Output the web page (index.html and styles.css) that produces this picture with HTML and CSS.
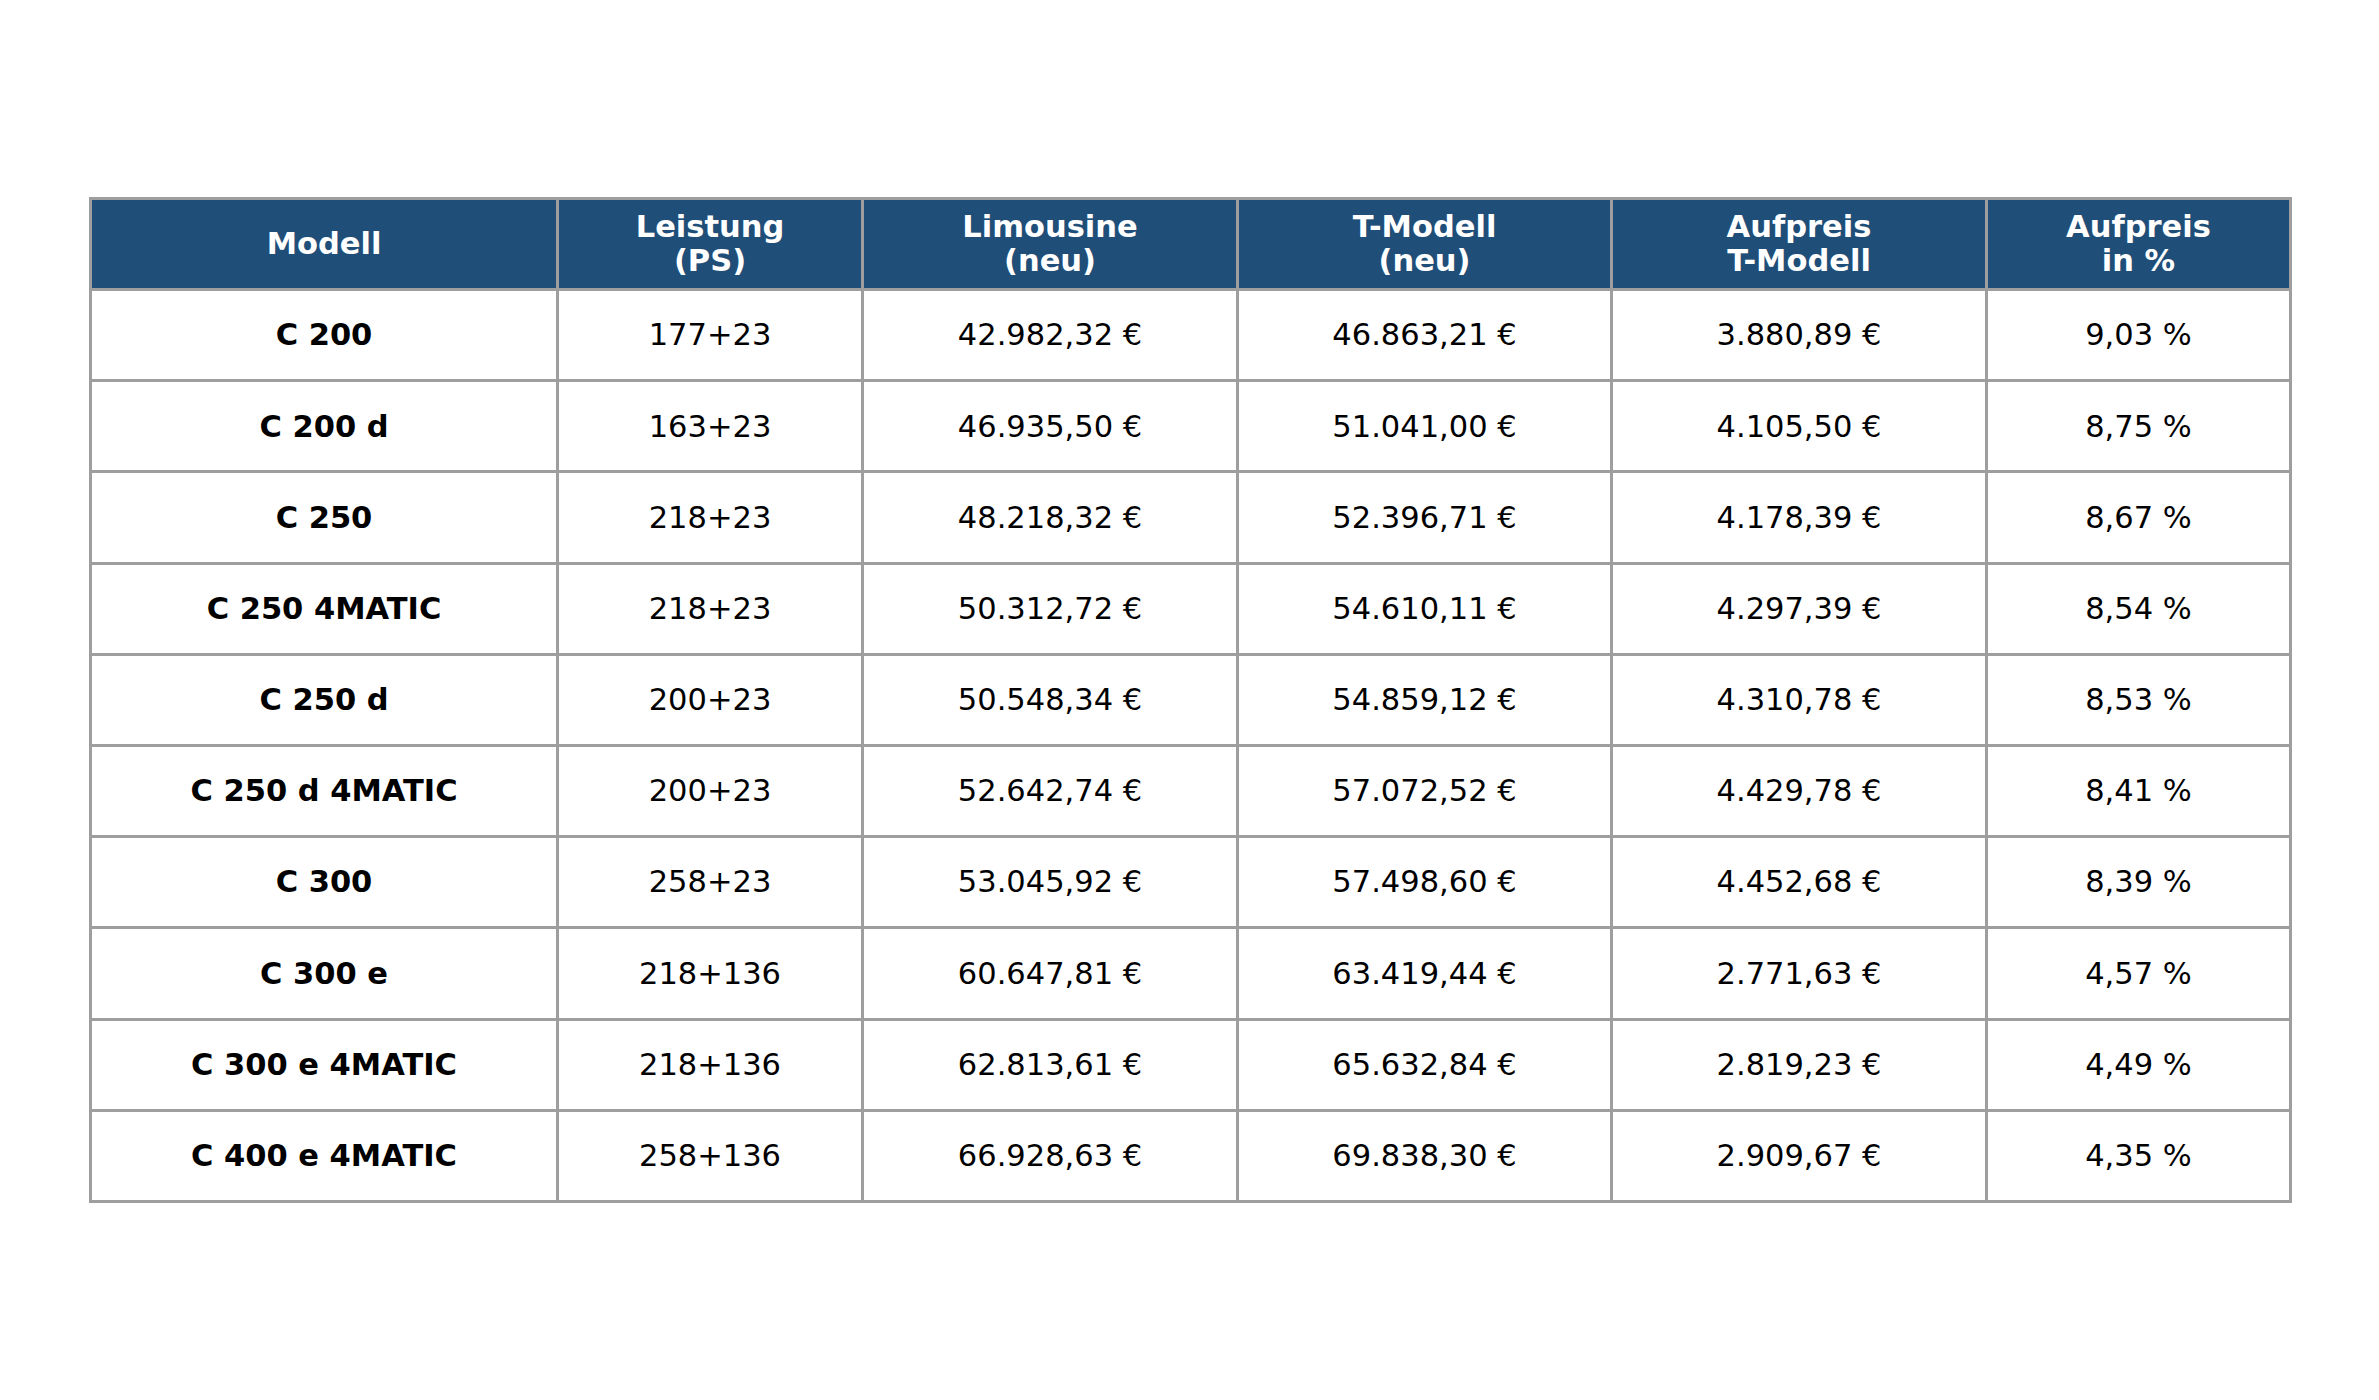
FILE: index.html
```html
<!DOCTYPE html>
<html lang="de">
<head>
<meta charset="utf-8">
<title>C-Klasse Preise</title>
<link rel="stylesheet" href="styles.css">
</head>
<body>
<main class="page">
  <table class="price-table">
    <colgroup>
      <col class="c-model">
      <col class="c-ps">
      <col class="c-lim">
      <col class="c-t">
      <col class="c-auf">
      <col class="c-pct">
    </colgroup>
    <thead>
      <tr class="head-row">
        <th>Modell</th>
        <th>Leistung<br>(PS)</th>
        <th>Limousine<br>(neu)</th>
        <th>T-Modell<br>(neu)</th>
        <th>Aufpreis<br>T-Modell</th>
        <th>Aufpreis<br>in %</th>
      </tr>
    </thead>
    <tbody>
      <tr><td class="model">C 200</td><td>177+23</td><td>42.982,32 €</td><td>46.863,21 €</td><td>3.880,89 €</td><td>9,03 %</td></tr>
      <tr><td class="model">C 200 d</td><td>163+23</td><td>46.935,50 €</td><td>51.041,00 €</td><td>4.105,50 €</td><td>8,75 %</td></tr>
      <tr><td class="model">C 250</td><td>218+23</td><td>48.218,32 €</td><td>52.396,71 €</td><td>4.178,39 €</td><td>8,67 %</td></tr>
      <tr><td class="model">C 250 4MATIC</td><td>218+23</td><td>50.312,72 €</td><td>54.610,11 €</td><td>4.297,39 €</td><td>8,54 %</td></tr>
      <tr><td class="model">C 250 d</td><td>200+23</td><td>50.548,34 €</td><td>54.859,12 €</td><td>4.310,78 €</td><td>8,53 %</td></tr>
      <tr><td class="model">C 250 d 4MATIC</td><td>200+23</td><td>52.642,74 €</td><td>57.072,52 €</td><td>4.429,78 €</td><td>8,41 %</td></tr>
      <tr><td class="model">C 300</td><td>258+23</td><td>53.045,92 €</td><td>57.498,60 €</td><td>4.452,68 €</td><td>8,39 %</td></tr>
      <tr><td class="model">C 300 e</td><td>218+136</td><td>60.647,81 €</td><td>63.419,44 €</td><td>2.771,63 €</td><td>4,57 %</td></tr>
      <tr><td class="model">C 300 e 4MATIC</td><td>218+136</td><td>62.813,61 €</td><td>65.632,84 €</td><td>2.819,23 €</td><td>4,49 %</td></tr>
      <tr><td class="model">C 400 e 4MATIC</td><td>258+136</td><td>66.928,63 €</td><td>69.838,30 €</td><td>2.909,67 €</td><td>4,35 %</td></tr>
    </tbody>
  </table>
</main>
</body>
</html>
```

FILE: styles.css
```css
html, body {
  margin: 0;
  padding: 0;
  background: #ffffff;
}

body {
  font-family: "DejaVu Sans", "Liberation Sans", sans-serif;
  color: #000000;
}

.page {
  padding: 197px 0 0 89px;
}

.price-table {
  border-collapse: separate;
  border-spacing: 0;
  table-layout: fixed;
  width: 2203px;
  border-top: 3px solid #9e9e9e;
  border-left: 3px solid #9e9e9e;
  font-size: 30.5px;
}

.c-model { width: 467px; }
.c-ps { width: 305px; }
.c-lim { width: 375px; }
.c-t { width: 374px; }
.c-auf { width: 375px; }
.c-pct { width: 304px; }

.price-table th,
.price-table td {
  box-sizing: border-box;
  border-right: 3px solid #9e9e9e;
  border-bottom: 3px solid #9e9e9e;
  padding: 0 8px;
  text-align: center;
  vertical-align: middle;
  line-height: 1.1;
}

.head-row {
  height: 91px;
}

.price-table th {
  background: #1f4e79;
  color: #ffffff;
  font-weight: bold;
}

.price-table tbody tr {
  height: 91.2px;
}

.price-table td {
  font-weight: normal;
}

.price-table td.model {
  font-weight: bold;
}
```
